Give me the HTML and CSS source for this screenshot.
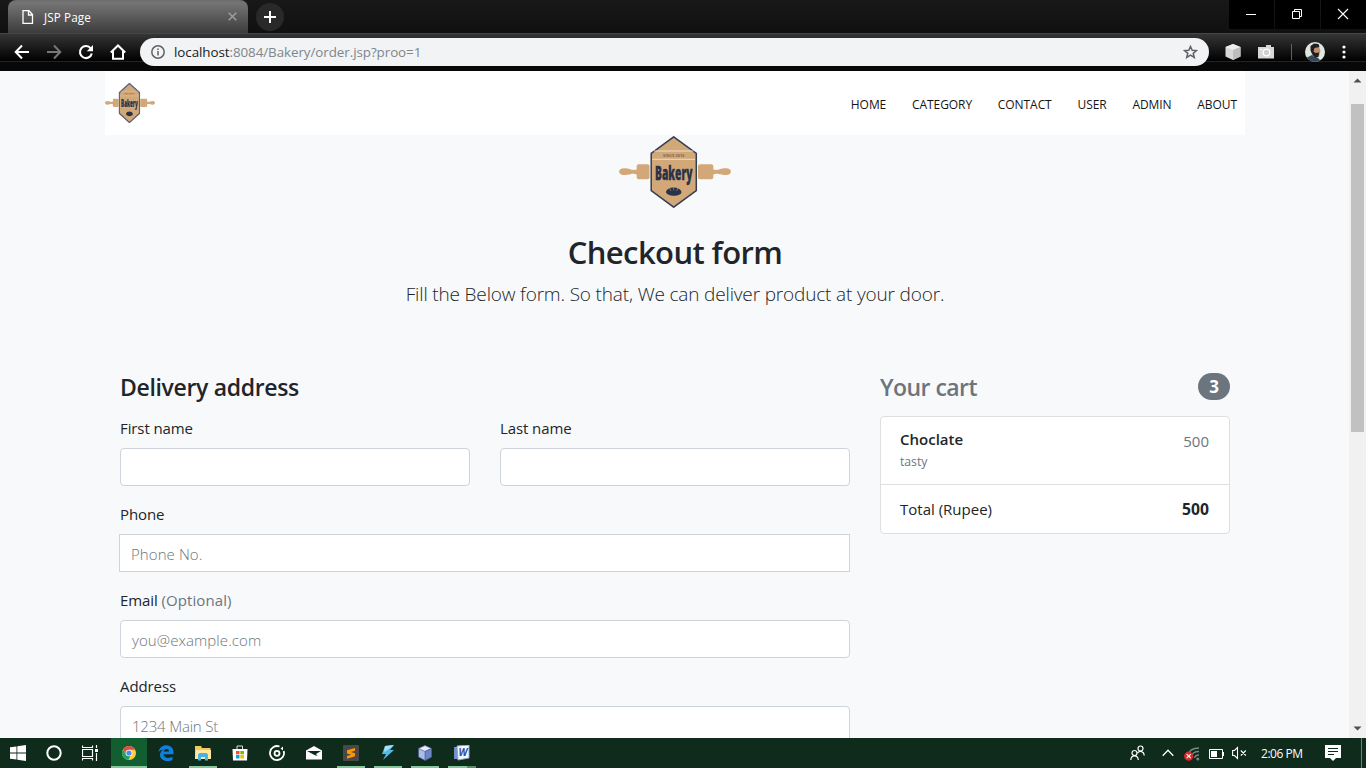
FILE: index.html
```html
<!DOCTYPE html>
<html lang="en">
<head>
<meta charset="utf-8">
<title>JSP Page</title>
<link rel="stylesheet" href="styles.css">
</head>
<body>
<div class="screen">
  <div class="tabstrip">
    <div class="tab">
      <svg class="file" width="12" height="14" viewBox="0 0 12 14" fill="none" stroke="#fff" stroke-width="1.300"><path d="M1 .7H7L10.500 4.500V13.300H1ZM6.500 .7V5H10.500"/></svg>
      <span class="tab-title">JSP Page</span>
      <svg width="9" height="9" viewBox="0 0 9 9" stroke="#a0a0a0" stroke-width="1.400"><path d="M.7 .7L8.300 8.300M8.300 .7L.7 8.300"/></svg>
    </div>
    <div class="newtab"><svg width="12" height="12" viewBox="0 0 12 12" stroke="#fff" stroke-width="2"><path d="M6 0V12M0 6H12"/></svg></div>
    <div class="wincontrols">
      <span><svg width="12" height="12" viewBox="0 0 12 12" stroke="#fff"><path d="M1 6.500H11"/></svg></span>
      <span><svg width="12" height="12" viewBox="0 0 12 12" fill="none" stroke="#fff"><path d="M1.500 3.500H8.500V10.500H1.500ZM3.500 3.500V1.500H10.500V8.500H8.500"/></svg></span>
      <span><svg width="12" height="12" viewBox="0 0 12 12" stroke="#fff" stroke-width="1.100"><path d="M1 1L11 11M11 1L1 11"/></svg></span>
    </div>
  </div>
  <div class="toolbar">
    <div class="navbuttons">
      <svg width="16" height="16" viewBox="0 0 16 16" fill="none" stroke="#fff" stroke-width="2"><path d="M15 8H2M8 1.500L1.700 8L8 14.500"/></svg>
      <svg width="16" height="16" viewBox="0 0 16 16" fill="none" stroke="#777" stroke-width="2"><path d="M1 8H14M8 1.500L14.300 8L8 14.500"/></svg>
      <svg width="16" height="16" viewBox="0 0 16 16"><path d="M12.800 4.500A6 6 0 1 0 13.800 9.500" fill="none" stroke="#fff" stroke-width="2.100"/><path d="M15 1V7.200H8.800Z" fill="#fff"/></svg>
      <svg class="home" width="16" height="16" viewBox="0 0 16 16" fill="none" stroke="#fff" stroke-width="2"><path d="M.8 8.500L8 1.500L15.200 8.500M3 7V14.700H13V7"/></svg>
    </div>
    <div class="omnibox">
      <svg width="14" height="14" viewBox="0 0 14 14" fill="none" stroke="#5f6368" stroke-width="1.500"><circle cx="7" cy="7" r="6.200"/><path d="M7 6V10.500M7 3.500V5"/></svg>
      <span class="url"><b>localhost</b>:8084/Bakery/order.jsp?proo=1</span>
      <svg width="15" height="14" viewBox="0 0 15 14" fill="none" stroke="#5f6368" stroke-width="1.500"><path d="M7.500 1.500L9.200 5.300L13.500 5.600L10.200 8.300L11.300 12.500L7.500 10.200L3.700 12.500L4.800 8.300L1.500 5.600L5.800 5.300Z"/></svg>
    </div>
    <div class="extensions">
      <svg width="16" height="16" viewBox="0 0 16 16"><path d="M8 0L15.500 3V12.500L8 16L.5 12.500V3Z" fill="#d8d8d8"/><path d="M8 0L15.500 3L8 6L.5 3Z" fill="#eee"/><path d="M8 6L15.500 3V12.500L8 16Z" fill="#bdbdbd"/></svg>
      <svg width="16" height="14" viewBox="0 0 16 14"><path d="M0 2H8V0H13V2H16V13.500H0Z" fill="#d6d6d6"/><circle cx="8.500" cy="7.500" r="3.300" fill="#cfcfcf" stroke="#fff" stroke-width="1.300"/><path d="M2 4.500H4" stroke="#fff"/></svg>
      <i class="rule"></i>
      <svg width="20" height="20" viewBox="0 0 20 20"><clipPath id="face"><circle cx="10" cy="10" r="10"/></clipPath><g clip-path="url(#face)"><path d="M0 0H20V20H0Z" fill="#dce9df"/><path d="M1 16L7 13L13 16L17 20H0Z" fill="#33485a"/><path d="M7 5L14 4.500L15.500 9L14 14L8 14.500Z" fill="#c08e70"/><path d="M5.500 8.500V4L9 1.500L13.500 2L14.500 5L9.500 6L8.500 9.500L10.500 11L14 10.500L13.500 15L10 15.500L7 12Z" fill="#201e20"/></g></svg>
      <svg width="4" height="14" viewBox="0 0 4 14" fill="#fff"><circle cx="2" cy="2" r="1.600"/><circle cx="2" cy="7" r="1.600"/><circle cx="2" cy="12" r="1.600"/></svg>
    </div>
  </div>
  <div class="viewport">
    <main class="page">
      <header class="header">
        <svg width="50" height="40" viewBox="0 0 112 72" preserveAspectRatio="none">
          <g fill="#d3a878">
            <rect x="17.700" y="28.300" width="12.800" height="15" rx="2"/>
            <rect x="79" y="28.300" width="15.300" height="15" rx="2"/>
            <path d="M18 33.500C12 35 12 32.300 5 32.300C-1.500 32.300-1.500 39 5 39C12 39 12 36.500 18 38.500ZM94 33.500C100 35 100 32.300 107 32.300C113.500 32.300 113.500 39 107 39C100 39 100 36.500 94 38.500Z"/>
            <path d="M54.700 .8L77.300 17.300V54.700L54.700 71.200L32.200 54.700V17.300Z" stroke="#5a6072" stroke-width="2.500"/>
          </g>
          <path d="M35 15H74.500M33.500 23.300H76" stroke="#e3c9a8" stroke-width=".9"/>
          <path d="M44 19.300H66" stroke="#9c8568" stroke-width="2" stroke-dasharray="9 1"/>
          <text class="logo-name" x="36" y="44" font-size="20" textLength="37.500" lengthAdjust="spacingAndGlyphs">Bakery</text>
          <path d="M47 56C48 50 61 50 62.500 56C62 61 48 61 47 56Z" fill="#283249"/>
        </svg>
        <nav class="nav"><a>HOME</a><a>CATEGORY</a><a>CONTACT</a><a>USER</a><a>ADMIN</a><a>ABOUT</a></nav>
      </header>
      <section class="intro">
        <svg width="112" height="72" viewBox="0 0 112 72">
          <g fill="#d3a878">
            <rect x="17.700" y="28.300" width="12.800" height="15" rx="2"/>
            <rect x="79" y="28.300" width="15.300" height="15" rx="2"/>
            <path d="M18 33.500C12 35 12 32.300 5 32.300C-1.500 32.300-1.500 39 5 39C12 39 12 36.500 18 38.500ZM94 33.500C100 35 100 32.300 107 32.300C113.500 32.300 113.500 39 107 39C100 39 100 36.500 94 38.500Z"/>
            <path d="M54.700 .8L77.300 17.300V54.700L54.700 71.200L32.200 54.700V17.300Z" stroke="#343e55" stroke-width="1.500"/>
          </g>
          <path d="M35 15H74.500M33.500 23.300H76" stroke="#efe3d3" stroke-width=".9"/>
          <text x="44" y="20.800" font-size="3.800" font-weight="700" fill="#776752" textLength="21.500">SINCE 2016</text>
          <text class="logo-name" x="36" y="44" font-size="20" textLength="37.500" lengthAdjust="spacingAndGlyphs">Bakery</text>
          <path d="M47 56C48 50 61 50 62.500 56C62 61 48 61 47 56Z" fill="#283249"/>
          <path d="M50.500 52L52 55M54.700 51V54.500M59 52L57.500 55" stroke="#d3a878" stroke-width=".5"/>
        </svg>
        <h2>Checkout form</h2>
        <p>Fill the Below form. So that, We can deliver product at your door.</p>
      </section>
      <div class="columns">
        <form class="address">
          <h4><span class="heading">Delivery address</span></h4>
          <div class="names">
            <div class="field"><label>First name</label><div class="input"></div></div>
            <div class="field"><label>Last name</label><div class="input"></div></div>
          </div>
          <div class="field"><label>Phone</label><div class="input square">Phone No.</div></div>
          <div class="field"><label>Email <span class="muted">(Optional)</span></label><div class="input">you@example.com</div></div>
          <div class="field"><label>Address</label><div class="input street">1234 Main St</div></div>
        </form>
        <aside class="cart">
          <h4 class="muted"><span class="heading cart-title">Your cart</span><span class="badge">3</span></h4>
          <ul>
            <li class="item"><div><h6>Choclate</h6><small>tasty</small></div><span class="price">500</span></li>
            <li class="total"><span>Total (Rupee)</span><strong>500</strong></li>
          </ul>
        </aside>
      </div>
    </main>
    <div class="scrollbar">
      <svg width="9" height="5" viewBox="0 0 9 5"><path d="M.5 4.500L4.500 .5L8.500 4.500Z" fill="#505050"/></svg>
      <div class="thumb"></div>
      <svg class="down" width="9" height="5" viewBox="0 0 9 5"><path d="M.5 .5L4.500 4.500L8.500 .5Z" fill="#505050"/></svg>
    </div>
  </div>
  <footer class="taskbar">
    <div class="system">
      <span><svg width="16" height="16" viewBox="0 0 16 16" fill="#fff"><path d="M0 2.300L6.500 1.400V7.600H0ZM7.300 1.200L16 0V7.600H7.300ZM0 8.400H6.500V14.600L0 13.700ZM7.300 8.400H16V16L7.300 14.800Z"/></svg></span>
      <span><svg width="16" height="16" viewBox="0 0 16 16" fill="none" stroke="#fff" stroke-width="2"><circle cx="8" cy="8" r="6.700"/></svg></span>
      <span><svg width="16" height="16" viewBox="0 0 16 16" fill="none" stroke="#fff"><path d="M.5 .5V2.500H10.500V.5M1.500 4.500H10.500V11.500H.5V4.500ZM.5 15.500V13.500H10.500V15.500M14.500 0V3M14.500 8V16" stroke-width="1.200"/><path d="M13 4H16V7H13Z" fill="#fff" stroke="none"/></svg></span>
    </div>
    <div class="apps">
      <span class="active run"><svg width="16" height="16" viewBox="0 0 16 16"><circle cx="8" cy="8" r="7" fill="#ffcd42"/><path d="M2 4.500A7 7 0 0 1 14.200 4.700H8L5 9.500Z" fill="#dd5144"/><path d="M1.900 4.600L5 9.700L9.300 11L7.300 15A7 7 0 0 1 1.900 4.600Z" fill="#1da462"/><circle cx="8" cy="8" r="3.300" fill="#fff"/><circle cx="8" cy="8" r="2.600" fill="#4c8bf5"/></svg></span>
      <span><svg width="16" height="16" viewBox="0 0 16 16"><path d="M.5 7C1.500 2.500 4.500 .3 8.200 .3C12.500 .3 15.500 3.300 15.500 7.500V9.300H5.500C5.700 12 8 13 10 13C12 13 13.500 12.500 14.500 11.800V15C13 15.800 11.500 16 9.500 16C5 16 2 13.500 2 10C2 7.500 3.500 5.500 5.500 4.500C3.500 4.700 1.500 5.500 .5 7ZM5.700 6.500H11C11 4.800 10 4 8.500 4C7 4 6 5 5.700 6.500Z" fill="#0f80df"/></svg></span>
      <span class="run"><svg width="16" height="16" viewBox="0 0 16 16"><path d="M0 1H6L7 3H15.500V14H0Z" fill="#f5c95b"/><path d="M1 5H16V14H0Z" fill="#ffe9a2"/><path d="M3 15.500V9.500L4.500 8H11.500L13 9.500V15.500H10V12H6V15.500Z" fill="#43b4e4"/></svg></span>
      <span><svg width="16" height="16" viewBox="0 0 16 16"><path d="M5 4V1H10.500V4" fill="none" stroke="#ddd"/><path d="M.5 4H15.500L15 15.500H1Z" fill="#fff"/><path d="M4 6H7.500V9.300H4Z" fill="#f25022"/><path d="M8.300 6H12V9.300H8.300Z" fill="#7fba00"/><path d="M4 10H7.500V13.500H4Z" fill="#00a4ef"/><path d="M8.300 10H12V13.500H8.300Z" fill="#ffb900"/></svg></span>
      <span><svg width="16" height="16" viewBox="0 0 16 16" fill="none" stroke="#fff"><path d="M10.500 1.500A7 7 0 1 0 14.700 6" stroke-width="1.800"/><circle cx="8" cy="8.300" r="2.500" stroke-width="1.800"/><path d="M11.500 3.500L14 1.500V5.500Z" fill="#fff" stroke="none"/></svg></span>
      <span><svg width="16" height="14" viewBox="0 0 16 14"><path d="M0 4.500L8 0L16 4.500V13.500H0Z" fill="#fff"/><path d="M1 5H15L10 8L11.500 10L8.500 9Z" fill="#0d2b1c"/></svg></span>
      <span class="run"><svg width="16" height="16" viewBox="0 0 16 16"><rect width="16" height="16" rx="1" fill="#494847"/><path d="M12 3L4 5.300V8.500L8.300 9.800L4 11V13.700L12 11.300V8.200L7.700 6.900L12 5.700Z" fill="#ff9800"/></svg></span>
      <span class="run"><svg width="16" height="16" viewBox="0 0 16 16"><path d="M5 1L14 0L10 5L14 5L3 15L6 9H2Z" fill="#57b9df"/><path d="M5 1L14 0L9 4L4 7Z" fill="#a9e1f5"/></svg></span>
      <span class="run"><svg width="16" height="16" viewBox="0 0 16 16" stroke="#434d85" stroke-width=".6"><path d="M8 .5L14.500 3.500V12L8 15.500L1.500 12V3.500Z" fill="#a9bfeb"/><path d="M8 .5L14.500 3.500L8 6.500L1.500 3.500Z" fill="#e3efff"/><path d="M8 6.500L14.500 3.500V12L8 15.500Z" fill="#6d88c8"/></svg></span>
      <span class="run word"><svg width="16" height="16" viewBox="0 0 16 16"><path d="M0 2H4V14H0Z" fill="#758fc9"/><path d="M3 1L15 0V13L4 15Z" fill="#f5f8ff" stroke="#93a4d0"/><text x="4.500" y="11" font-size="10" font-weight="700" font-style="italic" fill="#304c9c">W</text></svg></span>
    </div>
    <div class="tray">
      <svg class="people" width="15" height="16" viewBox="0 0 15 16" fill="none" stroke="#fff" stroke-width="1.200"><circle cx="10.500" cy="3.500" r="2.500"/><circle cx="4.500" cy="8" r="2.500"/><path d="M.8 15C1 9.500 8 9.500 8.300 15M7.500 8C10 5 14 6.500 14.300 10.500"/></svg>
      <svg class="chevron" width="12" height="8" viewBox="0 0 12 8" fill="none" stroke="#fff" stroke-width="1.300"><path d="M.7 6.700L6 1.300L11.300 6.700"/></svg>
      <svg class="wifi" width="16" height="14" viewBox="0 0 16 14" fill="none" stroke="#77877e"><path d="M4 8C5 4 9 1 15 1M7.500 9.500C8 6.500 11 4.500 15 4.500M10.500 11C11 9 13 8 15 8" stroke-width="1.300"/><circle cx="13.800" cy="12" r="1.500" fill="#77877e" stroke="none"/><circle cx="4.700" cy="9.200" r="4.600" fill="#d82a2e" stroke="none"/><path d="M2.700 7.200L6.700 11.200M6.700 7.200L2.700 11.200" stroke="#fff" stroke-width="1.100"/></svg>
      <svg class="battery" width="15" height="10" viewBox="0 0 15 10"><path d="M.5 .5H13.500V9.500H.5Z" fill="none" stroke="#fff"/><path d="M2 2H8V8H2ZM14 3H15V7H14Z" fill="#fff"/></svg>
      <svg class="volume" width="15" height="14" viewBox="0 0 15 14" fill="none" stroke="#fff" stroke-width="1.100"><path d="M.6 4.500H2.500L5.500 1.500V12.500L2.500 9.500H.6ZM8.800 4.500L13.800 9.500M13.800 4.500L8.800 9.500"/></svg>
      <span class="clock">2:06 PM</span>
      <svg class="notes" width="16" height="16" viewBox="0 0 16 16"><path d="M0 0H16V13H11L8 16L5 13H0Z" fill="#fff"/><path d="M3 3.500H13M3 6.500H13M3 9.500H9" stroke="#0d2b1c"/></svg>
      <i class="edge"></i>
    </div>
  </footer>
</div>
</body>
</html>
```
FILE: styles.css
```css
* { box-sizing: border-box; }
body { margin: 0; font-family: "Open Sans", "Noto Sans", sans-serif; color: #212529; }
svg { display: block; flex: none; }
.logo-name { font-weight: 800; fill: #283249; stroke: #283249; stroke-width: .4px; }
.screen { width: 1366px; height: 768px; overflow: hidden; display: flex; flex-direction: column; }
.tabstrip { height: 33px; flex: none; display: flex; background: linear-gradient(#181818, #101010); padding-left: 8px; }
.tab { width: 240px; height: 33px; border-radius: 8px 8px 0 0; background: linear-gradient(#6d6d6d, #747474 10%, #3c3c3c); display: flex; align-items: center; padding: 0 11px 0 14px; color: #fff; font-size: 11.7px; }
.tab-title { flex: 1; margin-left: 10px; letter-spacing: 0.1px; }
.newtab { width: 28px; height: 28px; margin: 3px 0 0 8px; border-radius: 50%; background: #292929; display: flex; align-items: center; justify-content: center; }
.wincontrols { margin-left: auto; height: 29px; display: flex; gap: 1px; }
.wincontrols span { width: 45px; background: #000; display: flex; align-items: center; justify-content: center; padding: 0 2px 1px 0; }
.toolbar { height: 38px; flex: none; display: flex; align-items: center; border-top: 1px solid #454545; background: linear-gradient(#353535, #000 27px, #242424 27px, #242424 28px, #080808 28px); padding: 0 20px 2px 14px; }
.navbuttons { display: flex; gap: 16px; width: 126px; }
.omnibox { width: 1069px; height: 28px; border-radius: 14px; background: #f1f3f4; display: flex; align-items: center; padding: 0 11px; font-size: 13.400px; color: #80868b; }
.url { flex: 1; margin-left: 9px; letter-spacing: -0.07px; }
.url b { font-weight: 400; color: #202124; }
.extensions { display: flex; flex: 1; align-items: center; justify-content: space-between; padding-left: 16px; }
.rule { width: 1px; height: 16px; background: #606060; margin: 0 -4px 0 0; }
.viewport { height: 667px; flex: none; display: flex; background: #f8f9fa; overflow: hidden; }
.page { width: 1349px; height: 667px; overflow: hidden; background: #f8f9fb; padding-left: 105px; }
.header { width: 1140px; height: 64px; background: #fff; display: flex; align-items: center; justify-content: space-between; padding-right: 8px; }
.nav { display: flex; gap: 25.8px; font-size: 12px; line-height: 18px; padding-top: 3px; letter-spacing: -0.07px; color: #151515; }
.intro { width: 1140px; text-align: center; padding-top: 1px; height: 236px; }
.intro svg { margin: 0 auto; }
h2, h4, h6, p, ul { margin: 0; padding: 0; }
h2 { font-size: 31px; line-height: 38px; font-weight: 600; margin-top: 25px; margin-bottom: 8px; letter-spacing: -0.6px; }
.intro p { font-size: 19px; line-height: 30px; font-weight: 300; letter-spacing: -0.16px; }
.columns { width: 1140px; padding: 0 15px; display: flex; gap: 30px; }
.address { width: 730px; }
h4 { height: 29px; font-size: 23px; line-height: 29px; font-weight: 600; margin-bottom: 16px; letter-spacing: -0.33px; display: flex; justify-content: space-between; }
.heading { padding-top: 2px; }
.cart-title { letter-spacing: -0.55px; }
.names { display: flex; gap: 30px; }
.names .field { flex: 1; }
.field { margin-bottom: 16px; }
label { display: block; font-size: 15px; line-height: 24px; margin-bottom: 8px; letter-spacing: -0.1px; }
label .muted { letter-spacing: 0.1px; }
.muted { color: #6c757d; }
.input { height: 38px; border: 1px solid #ced4da; border-radius: 4px; background: #fff; padding: 7px 11px; font-size: 15px; line-height: 24px; font-weight: 300; color: #6c757d; letter-spacing: 0.08px; }
.square { border-radius: 0; margin-left: -1px; }
.street { letter-spacing: -0.2px; }
.cart { width: 350px; }
.badge { width: 32px; height: 27px; margin-top: 2px; border-radius: 14px; background: #6c757d; color: #fff; font-size: 17px; line-height: 27px; font-weight: 700; text-align: center; }
.cart ul { list-style: none; border: 1px solid #dfdfdf; border-radius: 4px; background: #fff; }
.cart li { display: flex; justify-content: space-between; padding: 12px 20px 12px 19px; font-size: 15px; line-height: 24px; }
.item { height: 68px; border-bottom: 1px solid #dfdfdf; }
h6 { font-size: 15px; line-height: 20px; font-weight: 600; }
small { display: block; font-size: 12.200px; line-height: 25px; color: #6c757d; }
.price { color: #6c757d; }
.total { height: 48px; }
.total strong { font-size: 15.700px; }
.scrollbar { width: 17px; background: #f1f1f1; display: flex; flex-direction: column; align-items: center; padding-top: 7px; }
.thumb { width: 13px; height: 328px; margin-top: 21px; background: #c1c1c1; }
.down { margin-top: auto; margin-bottom: 7px; }
.taskbar { height: 30px; flex: none; background: #0e2b1c; display: flex; color: #fff; }
.system { display: flex; width: 111px; }
.system span, .apps span { width: 36px; height: 30px; display: flex; align-items: center; justify-content: center; }
.apps { display: flex; gap: 1px; }
.run { background: linear-gradient(#85c79c, #85c79c) center bottom / 28px 2px no-repeat; }
.apps .active { background: linear-gradient(#85c79c, #85c79c) center bottom / 36px 2px no-repeat #125e30; }
.word { background-image: linear-gradient(90deg, #85c79c 19px, #5b8a6d 19px); }
.tray { margin-left: auto; display: flex; align-items: center; }
.people { margin-right: 17px; }
.chevron { margin-right: 10px; }
.wifi { margin-right: 9px; margin-top: 2px; }
.battery { margin-right: 8px; margin-top: 1px; }
.volume { margin-right: 14px; }
.clock { width: 43px; font-size: 12px; white-space: nowrap; letter-spacing: -0.45px; }
.notes { margin-left: 21px; }
.edge { width: 1px; height: 30px; margin: 0 4px 0 20px; background: #6c8274; }
```
